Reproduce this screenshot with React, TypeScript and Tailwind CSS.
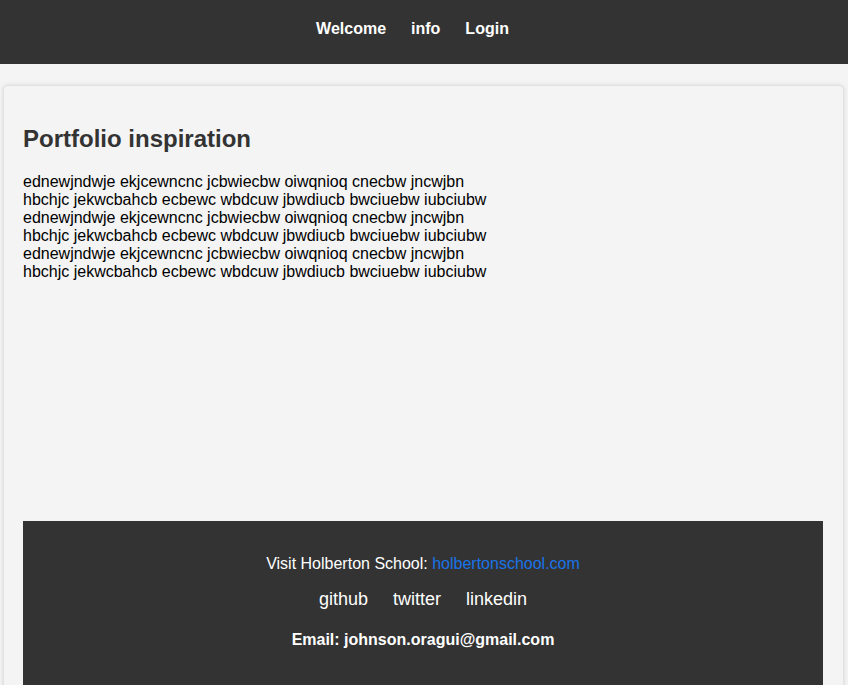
import React from "react";

const line1 = "ednewjndwje ekjcewncnc jcbwiecbw oiwqnioq cnecbw jncwjbn";
const line2 = "hbchjc jekwcbahcb ecbewc wbdcuw jbwdiucb bwciuebw iubciubw";

export default function App() {
  return (
    <div className="min-h-[685px] bg-[#f4f4f4] text-black" style={{ fontFamily: '"Liberation Sans", Arial, sans-serif' }}>
      <header className="h-16 bg-[#333333] flex justify-center pt-[20px] pr-[23px]">
        <nav className="flex gap-[25px] text-white font-bold text-base leading-[18px] h-[18px]">
          <a href="#">Welcome</a>
          <a href="#">info</a>
          <a href="#">Login</a>
        </nav>
      </header>
      <main className="ml-[3px] mr-[4px] mt-[21px] bg-[#f4f4f4] border border-[#e2e2e2] rounded-[5px] shadow-[0_0_4px_rgba(0,0,0,0.12)] pl-[19px] pr-[20px] pt-[39px]">
        <h2 className="text-[24px] font-bold text-[#333333] leading-[28px]">Portfolio inspiration</h2>
        <p className="mt-[20px] text-base leading-[18px] h-[348px]">
          {line1}<br />{line2}<br />{line1}<br />{line2}<br />{line1}<br />{line2}
        </p>
        <footer className="bg-[#333333] text-white text-center pt-[34px] h-[180px]">
          <p className="text-base leading-[18px]">
            Visit Holberton School: <a href="#" className="text-[#1a73e8]">holbertonschool.com</a>
          </p>
          <div className="mt-[16px] flex justify-center gap-[25px] text-[18px] leading-[21px]">
            <a href="#">github</a>
            <a href="#">twitter</a>
            <a href="#">linkedin</a>
          </div>
          <p className="mt-[21px] font-bold text-base leading-[18px]">Email: johnson.oragui@gmail.com</p>
        </footer>
      </main>
    </div>
  );
}
